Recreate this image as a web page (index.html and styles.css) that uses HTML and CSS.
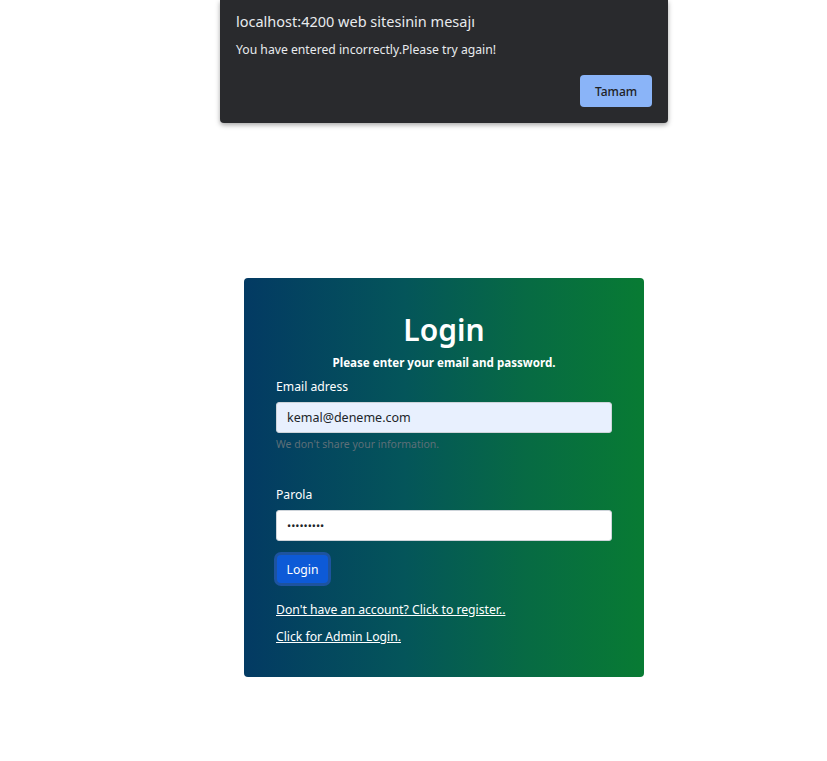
FILE: index.html
```html
<!DOCTYPE html>
<html>
<head>
<meta charset="utf-8">
<link rel="stylesheet" href="styles.css">
</head>
<body>
<div class="dialog">
  <div class="dlg-title">localhost:4200 web sitesinin mesajı</div>
  <div class="dlg-msg">You have entered incorrectly.Please try again!</div>
  <div class="dlg-actions"><button class="dlg-btn">Tamam</button></div>
</div>
<main class="page">
  <form class="card">
    <h1 class="title">Login</h1>
    <p class="subtitle">Please enter your email and password.</p>
    <label class="label">Email adress</label>
    <div class="input filled">kemal@deneme.com</div>
    <div class="help">We don't share your information.</div>
    <label class="label label-pw">Parola</label>
    <div class="input pw">•••••••••</div>
    <div class="btn-row"><button type="button" class="btn">Login</button></div>
    <a class="link" href="#">Don't have an account? Click to register..</a>
    <a class="link" href="#">Click for Admin Login.</a>
  </form>
</main>
</body>
</html>
```
FILE: styles.css
```css
html, body {
  margin: 0;
  padding: 0;
  background: #fff;
  font-family: "Noto Sans", "Open Sans", sans-serif;
}
.dialog {
  position: absolute;
  left: 220px;
  top: 0;
  width: 448px;
  height: 123px;
  box-sizing: border-box;
  background: #292a2d;
  border-radius: 0 0 4px 4px;
  box-shadow: 0 2px 5px rgba(0,0,0,0.35);
  padding: 11px 16px 0 16px;
  color: #e8eaed;
}
.dlg-title {
  font-size: 14.5px;
  line-height: 20px;
}
.dlg-msg {
  font-size: 12.2px;
  line-height: 18px;
  margin-top: 10px;
}
.dlg-actions {
  display: flex;
  justify-content: flex-end;
  margin-top: 16px;
}
.dlg-btn {
  width: 72px;
  height: 32px;
  border: none;
  border-radius: 4px;
  background: #8ab4f8;
  color: #202124;
  font-family: inherit;
  font-size: 12px;
  font-weight: 500;
}
.page {
  display: flex;
  padding-top: 278px;
}
.card {
  width: 400px;
  height: 399px;
  box-sizing: border-box;
  margin-left: 244px;
  padding: 26px 32px 0 32px;
  border-radius: 4px;
  background: linear-gradient(to right, #033a63 0%, #04555a 40%, #076a44 70%, #087b33 100%);
  color: #fff;
  display: flex;
  flex-direction: column;
  align-items: flex-start;
}
.title {
  align-self: stretch;
  text-align: center;
  font-size: 30px;
  font-weight: 600;
  line-height: 40px;
  margin: 6px 0 0 0;
}
.subtitle {
  align-self: stretch;
  text-align: center;
  font-size: 11.6px;
  font-weight: 700;
  line-height: 18px;
  margin: 4px 0 0 0;
}
.label {
  font-size: 12.2px;
  line-height: 18px;
  margin-top: 6px;
}
.label-pw {
  margin-top: 34px;
}
.input {
  margin-top: 6px;
  width: 336px;
  height: 31px;
  box-sizing: border-box;
  border: 1px solid #ced4da;
  border-radius: 3px;
  background: #fff;
  color: #212529;
  font-size: 12.5px;
  line-height: 29px;
  padding-left: 10px;
}
.input.filled {
  background: #e8f0fe;
}
.input.pw {
  font-size: 11px;
}
.help {
  font-size: 10.5px;
  color: #5e6f78;
  line-height: 16px;
  margin-top: 3px;
}
.btn-row {
  margin-top: 14px;
  margin-left: 1px;
}
.btn {
  width: 51px;
  height: 28px;
  box-sizing: border-box;
  border: none;
  border-radius: 4px;
  background: #0d5ad7;
  box-shadow: 0 0 0 3px #1d539f;
  color: #fff;
  font-family: inherit;
  font-size: 12.2px;
  padding: 0;
}
.link {
  color: #fff;
  font-size: 12.2px;
  line-height: 18px;
  text-decoration: underline;
}
.link:first-of-type {
  margin-top: 18px;
}
.link + .link {
  margin-top: 9px;
}
```
